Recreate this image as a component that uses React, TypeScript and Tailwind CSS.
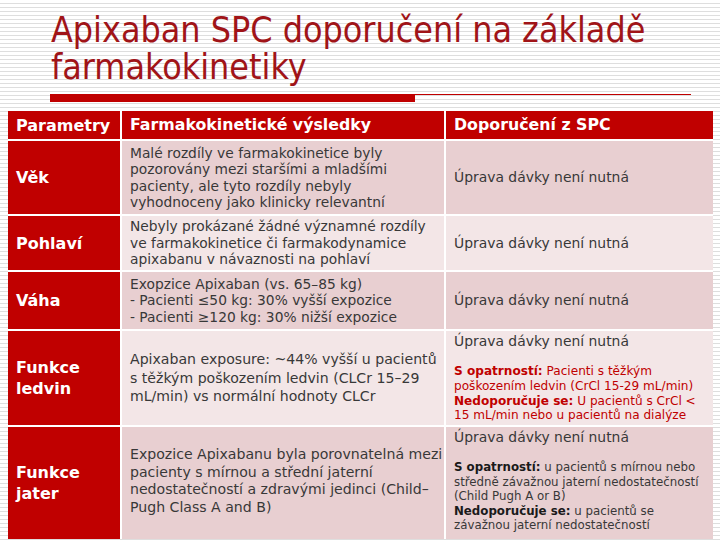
const stripes =
  "bg-[repeating-linear-gradient(to_bottom,#ffffff_0px,#ffffff_3px,#dedede_3px,#dedede_4px)]";

const dark = "bg-[#e8cfd1]";
const light = "bg-[#f3e6e7]";

function Label({ children }: { children: React.ReactNode }) {
  return (
    <div className="flex items-center bg-[#c00000] px-[8px] text-[16px] font-bold leading-[21px] text-white">
      {children}
    </div>
  );
}

function Cell({
  tone,
  className = "",
  children,
}: {
  tone: string;
  className?: string;
  children: React.ReactNode;
}) {
  return (
    <div className={`${tone} flex px-[8px] text-[#383838] ${className}`}>
      {children}
    </div>
  );
}

export default function App() {
  return (
    <div
      className={`h-[540px] w-[720px] overflow-hidden ${stripes}`}
      style={{ fontFamily: '"DejaVu Sans", Verdana, sans-serif' }}
    >
      <div className="pl-[51px] pt-[11px]">
        <h1
          className="whitespace-nowrap text-[35.5px] font-normal leading-[37px] text-[#a01418]"
          style={{ fontFamily: '"DejaVu Sans Condensed", "DejaVu Sans", sans-serif' }}
        >
          Apixaban SPC doporučení na základě
          <br />
          farmakokinetiky
        </h1>
      </div>

      <div className="mt-[9px] flex items-start pl-[50px]">
        <div className="h-[8px] w-[365px] bg-[#c00000]" />
        <div className="h-[1px] w-[276px] bg-[#c00000]" />
      </div>

      <div className="ml-[8px] mt-[9px] grid w-[705px] grid-cols-[112px_322px_267px] grid-rows-[28px_73px_54px_57px_94px_112px] gap-[2px] bg-white">
        <Label>Parametry</Label>
        <div className="flex items-center bg-[#c00000] px-[8px] text-[15.8px] font-bold text-white">
          Farmakokinetické výsledky
        </div>
        <div className="flex items-center bg-[#c00000] px-[8px] text-[15.8px] font-bold text-white">
          Doporučení z SPC
        </div>

        <Label>Věk</Label>
        <Cell tone={dark} className="items-center whitespace-nowrap text-[13.8px] leading-[16.3px]">
          <div>
            Malé rozdíly ve farmakokinetice byly
            <br />
            pozorovány mezi staršími a mladšími
            <br />
            pacienty, ale tyto rozdíly nebyly
            <br />
            vyhodnoceny jako klinicky relevantní
          </div>
        </Cell>
        <Cell tone={dark} className="items-center text-[13.9px]">
          Úprava dávky není nutná
        </Cell>

        <Label>Pohlaví</Label>
        <Cell tone={light} className="items-center whitespace-nowrap text-[13.8px] leading-[16.5px]">
          <div>
            Nebyly prokázané žádné významné rozdíly
            <br />
            ve farmakokinetice či farmakodynamice
            <br />
            apixabanu v návaznosti na pohlaví
          </div>
        </Cell>
        <Cell tone={light} className="items-center text-[13.9px]">
          Úprava dávky není nutná
        </Cell>

        <Label>Váha</Label>
        <Cell tone={dark} className="items-center whitespace-nowrap text-[13.8px] leading-[16.5px]">
          <div>
            Exopzice Apixaban (vs. 65–85 kg)
            <br />- Pacienti ≤50 kg: 30% vyšší expozice
            <br />- Pacienti ≥120 kg: 30% nižší expozice
          </div>
        </Cell>
        <Cell tone={dark} className="items-center text-[13.9px]">
          Úprava dávky není nutná
        </Cell>

        <Label>
          Funkce
          <br />
          ledvin
        </Label>
        <Cell tone={light} className="items-center whitespace-nowrap text-[14.1px] leading-[18.5px]">
          <div>
            Apixaban exposure: ~44% vyšší u pacientů
            <br />s těžkým poškozením ledvin (CLCr 15–29
            <br />
            mL/min) vs normální hodnoty CLCr
          </div>
        </Cell>
        <Cell tone={light} className="flex-col whitespace-nowrap pt-[1px]">
          <div className="text-[13.9px] leading-[18px]">Úprava dávky není nutná</div>
          <div className="mt-[14px] text-[12.1px] leading-[14.8px] text-[#c00000]">
            <b>S opatrností:</b> Pacienti s těžkým
            <br />
            poškozením ledvin (CrCl 15-29 mL/min)
            <br />
            <b>Nedoporučuje se:</b> U pacientů s CrCl &lt;
            <br />
            15 mL/min nebo u pacientů na dialýze
          </div>
        </Cell>

        <Label>
          Funkce
          <br />
          jater
        </Label>
        <Cell tone={dark} className="items-center whitespace-nowrap pb-[4px] text-[14.1px] leading-[17.5px]">
          <div>
            Expozice Apixabanu byla porovnatelná mezi
            <br />
            pacienty s mírnou a střední jaterní
            <br />
            nedostatečností a zdravými jedinci (Child–
            <br />
            Pugh Class A and B)
          </div>
        </Cell>
        <Cell tone={dark} className="flex-col whitespace-nowrap pt-[1px]">
          <div className="text-[13.9px] leading-[18px]">Úprava dávky není nutná</div>
          <div className="mt-[14px] text-[11.8px] leading-[14.5px]">
            <b className="text-[#1a1a1a]">S opatrností:</b> u pacientů s mírnou nebo
            <br />
            středně závažnou jaterní nedostatečností
            <br />
            (Child Pugh A or B)
            <br />
            <b className="text-[#1a1a1a]">Nedoporučuje se:</b> u pacientů se
            <br />
            závažnou jaterní nedostatečností
          </div>
        </Cell>
      </div>
    </div>
  );
}
